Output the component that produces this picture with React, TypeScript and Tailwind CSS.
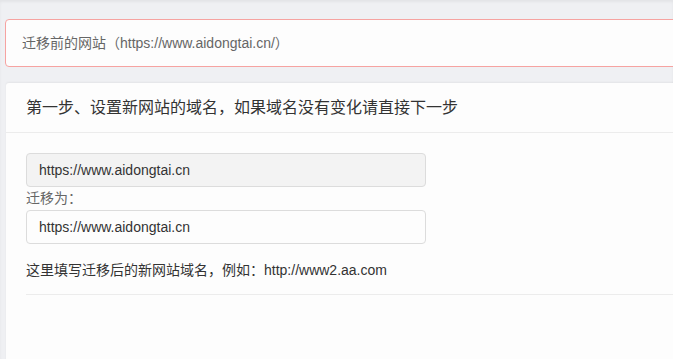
import React from 'react';

const font = { fontFamily: '"Liberation Sans", "Noto Sans CJK SC", sans-serif' };

const App = () => {
  return (
    <div
      className="h-[359px] w-[673px] overflow-hidden bg-[#eff0f3] shadow-[inset_0_2px_3px_rgba(0,0,0,0.05)]"
      style={font}
    >
      <div className="w-[720px] pl-[5px] pt-[19px]">
        {/* old site notice */}
        <div className="flex h-[48px] items-center rounded-[4px] border border-[#f6a3a1] bg-[#fdfdfd] pl-[16px] text-[14px] text-[#666]">
          迁移前的网站（https://www.aidongtai.cn/）
        </div>

        {/* step card */}
        <div className="ml-[1px] mt-[16px] h-[300px] rounded-[3px] bg-[#fdfdfd] shadow-[0_-1px_2px_rgba(0,0,0,0.05)]">
          <div className="flex h-[50px] items-center border-b border-[#ececec] pl-[20px] text-[16px] text-[#333]">
            第一步、设置新网站的域名，如果域名没有变化请直接下一步
          </div>
          <div className="pl-[20px] pt-[20px]">
            <input
              className="block h-[34px] w-[400px] rounded-[4px] border border-[#dcdcdc] bg-[#f3f3f3] pl-[12px] text-[14px] text-[#333] outline-none"
              value="https://www.aidongtai.cn"
              disabled
              readOnly
            />
            <div className="flex h-[23px] items-center text-[14px] text-[#666]">迁移为：</div>
            <input
              className="block h-[34px] w-[400px] rounded-[4px] border border-[#dcdcdc] bg-[#fdfdfd] pl-[12px] text-[14px] text-[#333] outline-none"
              defaultValue="https://www.aidongtai.cn"
            />
            <div className="mt-[16px] text-[14px] leading-[20px] text-[#333]">
              这里填写迁移后的新网站域名，例如：http://www2.aa.com
            </div>
            <div className="mt-[14px] border-t border-[#ececec]" />
          </div>
        </div>
      </div>
    </div>
  );
};

export default App;
